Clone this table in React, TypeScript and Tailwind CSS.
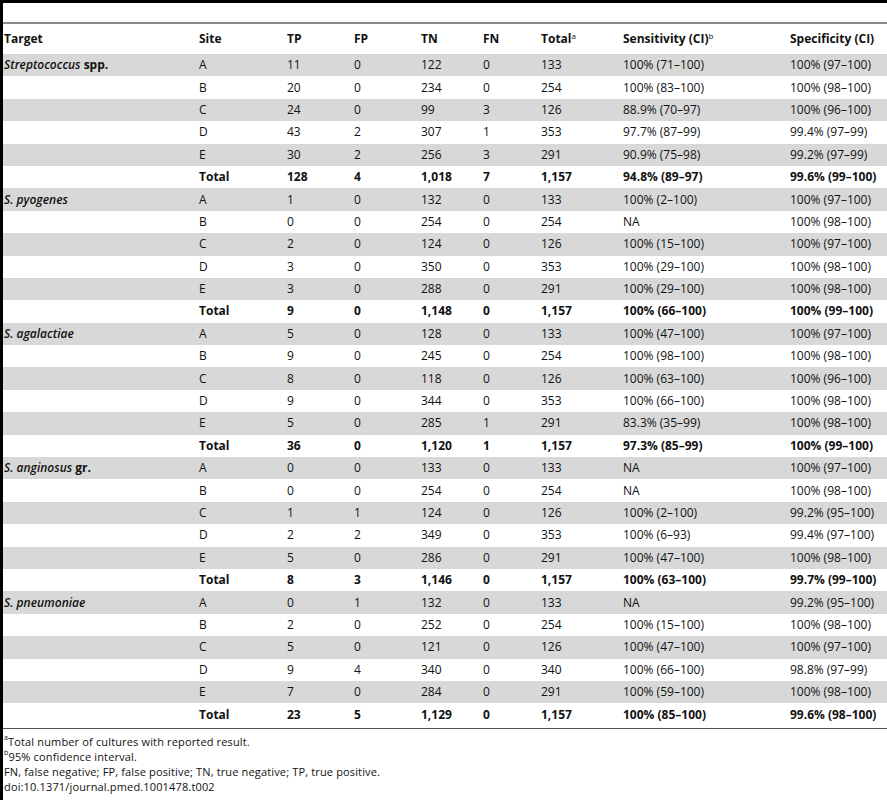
import React from "react";

type Row = {
  site: string;
  tp: string;
  fp: string;
  tn: string;
  fn: string;
  total: string;
  sens: string;
  spec: string;
};

interface Group {
  italic: string;
  suffix?: string;
  rows: Row[];
}

const r = (
  site: string,
  tp: string,
  fp: string,
  tn: string,
  fn: string,
  total: string,
  sens: string,
  spec: string
): Row => ({ site, tp, fp, tn, fn, total, sens, spec });

const groups: Group[] = [
  {
    italic: "Streptococcus",
    suffix: " spp.",
    rows: [
      r("A", "11", "0", "122", "0", "133", "100% (71–100)", "100% (97–100)"),
      r("B", "20", "0", "234", "0", "254", "100% (83–100)", "100% (98–100)"),
      r("C", "24", "0", "99", "3", "126", "88.9% (70–97)", "100% (96–100)"),
      r("D", "43", "2", "307", "1", "353", "97.7% (87–99)", "99.4% (97–99)"),
      r("E", "30", "2", "256", "3", "291", "90.9% (75–98)", "99.2% (97–99)"),
      r("Total", "128", "4", "1,018", "7", "1,157", "94.8% (89–97)", "99.6% (99–100)"),
    ],
  },
  {
    italic: "S. pyogenes",
    rows: [
      r("A", "1", "0", "132", "0", "133", "100% (2–100)", "100% (97–100)"),
      r("B", "0", "0", "254", "0", "254", "NA", "100% (98–100)"),
      r("C", "2", "0", "124", "0", "126", "100% (15–100)", "100% (97–100)"),
      r("D", "3", "0", "350", "0", "353", "100% (29–100)", "100% (98–100)"),
      r("E", "3", "0", "288", "0", "291", "100% (29–100)", "100% (98–100)"),
      r("Total", "9", "0", "1,148", "0", "1,157", "100% (66–100)", "100% (99–100)"),
    ],
  },
  {
    italic: "S. agalactiae",
    rows: [
      r("A", "5", "0", "128", "0", "133", "100% (47–100)", "100% (97–100)"),
      r("B", "9", "0", "245", "0", "254", "100% (98–100)", "100% (98–100)"),
      r("C", "8", "0", "118", "0", "126", "100% (63–100)", "100% (96–100)"),
      r("D", "9", "0", "344", "0", "353", "100% (66–100)", "100% (98–100)"),
      r("E", "5", "0", "285", "1", "291", "83.3% (35–99)", "100% (98–100)"),
      r("Total", "36", "0", "1,120", "1", "1,157", "97.3% (85–99)", "100% (99–100)"),
    ],
  },
  {
    italic: "S. anginosus",
    suffix: " gr.",
    rows: [
      r("A", "0", "0", "133", "0", "133", "NA", "100% (97–100)"),
      r("B", "0", "0", "254", "0", "254", "NA", "100% (98–100)"),
      r("C", "1", "1", "124", "0", "126", "100% (2–100)", "99.2% (95–100)"),
      r("D", "2", "2", "349", "0", "353", "100% (6–93)", "99.4% (97–100)"),
      r("E", "5", "0", "286", "0", "291", "100% (47–100)", "100% (98–100)"),
      r("Total", "8", "3", "1,146", "0", "1,157", "100% (63–100)", "99.7% (99–100)"),
    ],
  },
  {
    italic: "S. pneumoniae",
    rows: [
      r("A", "0", "1", "132", "0", "133", "NA", "99.2% (95–100)"),
      r("B", "2", "0", "252", "0", "254", "100% (15–100)", "100% (98–100)"),
      r("C", "5", "0", "121", "0", "126", "100% (47–100)", "100% (97–100)"),
      r("D", "9", "4", "340", "0", "340", "100% (66–100)", "98.8% (97–99)"),
      r("E", "7", "0", "284", "0", "291", "100% (59–100)", "100% (98–100)"),
      r("Total", "23", "5", "1,129", "0", "1,157", "100% (85–100)", "99.6% (98–100)"),
    ],
  },
];

// shared column template so header and body line up
const cols =
  "grid grid-cols-[195px_88px_67px_67px_62px_58px_82px_167px_1fr] items-center pl-px";

export default function App() {
  let rowIndex = 0;

  return (
    <div
      className="w-[887px] h-[800px] bg-white border-l-[3px] border-black text-[12px] text-[#111]"
      style={{ fontFamily: '"Open Sans", "DejaVu Sans", sans-serif' }}
    >
      <div className="h-[3px] bg-black" />
      <div className="h-[19px]" />
      <div className="h-[2px] bg-[#8a8a8a]" />

      {/* header */}
      <div className={`${cols} h-[30px] font-bold`}>
        <div>Target</div>
        <div>Site</div>
        <div>TP</div>
        <div>FP</div>
        <div>TN</div>
        <div>FN</div>
        <div>
          Total<sup className="text-[8px] leading-none font-normal">a</sup>
        </div>
        <div>
          Sensitivity (CI)<sup className="text-[8px] leading-none font-normal">b</sup>
        </div>
        <div>Specificity (CI)</div>
      </div>

      {/* body */}
      {groups.map((g) =>
        g.rows.map((row, i) => {
          const grey = rowIndex++ % 2 === 0;
          const bold = row.site === "Total";
          return (
            <div
              key={g.italic + row.site}
              className={`${cols} h-[22.4px] ${grey ? "bg-[#d8d8d8]" : ""} ${
                bold ? "font-bold" : ""
              }`}
            >
              <div>
                {i === 0 && (
                  <>
                    <span className="italic font-semibold">{g.italic}</span>
                    {g.suffix && <span className="font-bold">{g.suffix}</span>}
                  </>
                )}
              </div>
              <div>{row.site}</div>
              <div>{row.tp}</div>
              <div>{row.fp}</div>
              <div>{row.tn}</div>
              <div>{row.fn}</div>
              <div>{row.total}</div>
              <div>{row.sens}</div>
              <div>{row.spec}</div>
            </div>
          );
        })
      )}

      <div className="h-[2px]" />
      <div className="h-[1.5px] bg-[#555]" />

      {/* footnotes */}
      <div className="pl-px pt-[5px] text-[11px] leading-[15px] tracking-[0.15px]">
        <div>
          <span className="text-[7px] leading-none align-top">a</span>Total number of cultures
          with reported result.
        </div>
        <div>
          <span className="text-[7px] leading-none align-top">b</span>95% confidence interval.
        </div>
        <div>FN, false negative; FP, false positive; TN, true negative; TP, true positive.</div>
        <div>doi:10.1371/journal.pmed.1001478.t002</div>
      </div>
    </div>
  );
}
